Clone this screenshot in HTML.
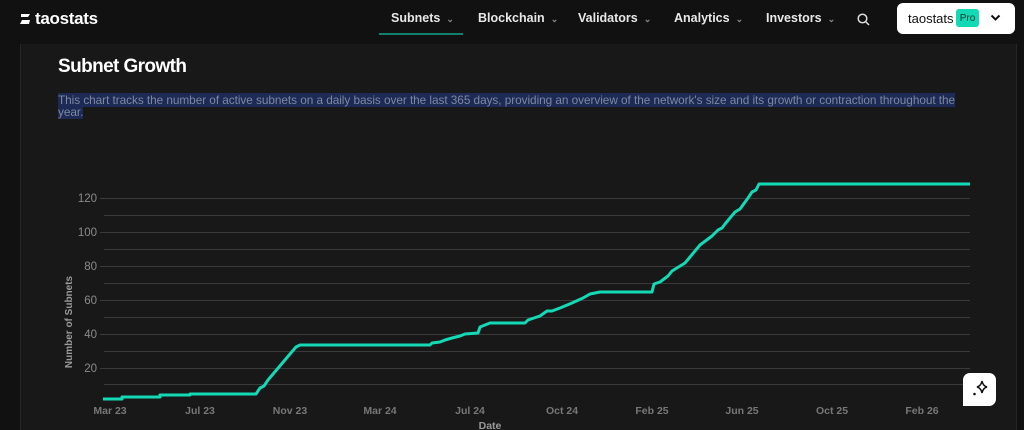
<!DOCTYPE html>
<html><head><meta charset="utf-8"><style>
body{margin:0;width:1024px;height:430px;overflow:hidden;background:#111;font-family:"Liberation Sans",sans-serif;position:relative}
.hdr{position:absolute;left:0;top:0;width:1024px;height:40px;background:#111}
.logo{position:absolute;left:20px;top:9px;color:#fff;font-size:17px;font-weight:bold;letter-spacing:-0.3px}
.nav{position:absolute;top:11px;color:#e8e8e8;font-size:12.5px;font-weight:bold}
.nav span{color:#888;font-size:9px;margin-left:6px}
.ul{position:absolute;left:379px;top:33px;width:84px;height:2px;background:#12806e}
.btn{position:absolute;left:897px;top:3px;width:118px;height:31px;background:#fff;border-radius:6px}
.panel{position:absolute;left:20px;top:44px;width:995px;height:386px;background:#181818;border-left:1px solid #262626;border-right:1px solid #262626}
h1{position:absolute;left:58px;top:56px;margin:0;color:#fff;font-size:19px;font-weight:bold;letter-spacing:-0.6px}
.desc{position:absolute;left:58px;top:94px;width:945px;color:#7e88a0;font-size:11.8px;line-height:12px;letter-spacing:-0.05px}
.desc span{background:#1c2a55}
.pro{position:absolute;left:59px;top:6px;width:23px;height:18px;background:#14d9b5;border-radius:3px;display:flex;align-items:center;justify-content:center;font-size:10px;color:#0a3a30}
</style></head><body>
<div class="hdr"></div>
<div class="logo"><svg width="11" height="12" viewBox="0 0 11 12" style="vertical-align:-1px;margin-right:4px"><path d="M1 1h9l-2 3H1z M2 7h8l-1 4H0z" fill="#fff"/></svg>taostats</div>
<div class="nav" style="left:391px">Subnets<span>⌄</span></div>
<div class="nav" style="left:478px">Blockchain<span>⌄</span></div>
<div class="nav" style="left:578px">Validators<span>⌄</span></div>
<div class="nav" style="left:674px">Analytics<span>⌄</span></div>
<div class="nav" style="left:766px">Investors<span>⌄</span></div>
<div class="ul"></div>
<svg style="position:absolute;left:857px;top:13px" width="13" height="13" viewBox="0 0 13 13"><circle cx="5.5" cy="5.5" r="4.3" fill="none" stroke="#ddd" stroke-width="1.5"/><path d="M9 9l3 3" stroke="#ddd" stroke-width="1.5"/></svg>
<div class="btn"><div style="position:absolute;left:11px;top:8px;font-size:13px;line-height:15px;color:#111">taostats</div><div class="pro">Pro</div><svg style="position:absolute;left:93px;top:11px" width="11" height="8" viewBox="0 0 11 8"><path d="M1.5 1.5l4 4 4-4" fill="none" stroke="#111" stroke-width="2"/></svg></div>
<div class="panel"></div>
<h1>Subnet Growth</h1>
<div class="desc"><span>This chart tracks the number of active subnets on a daily basis over the last 365 days, providing an overview of the network's size and its growth or contraction throughout the </span><br><span>year.</span></div>
<svg style="position:absolute;left:0;top:0" width="1024" height="430">
<g stroke="#3a3a3a" stroke-width="1">
<line x1="100" x2="970" y1="198.5" y2="198.5"/><line x1="104" x2="970" y1="215.5" y2="215.5"/>
<line x1="100" x2="970" y1="232.5" y2="232.5"/><line x1="104" x2="970" y1="249.5" y2="249.5"/>
<line x1="100" x2="970" y1="266.5" y2="266.5"/><line x1="104" x2="970" y1="283.5" y2="283.5"/>
<line x1="100" x2="970" y1="300.5" y2="300.5"/><line x1="104" x2="970" y1="317.5" y2="317.5"/>
<line x1="100" x2="970" y1="334.5" y2="334.5"/><line x1="104" x2="970" y1="351.5" y2="351.5"/>
<line x1="100" x2="970" y1="368.5" y2="368.5"/><line x1="104" x2="970" y1="384.5" y2="384.5"/>
</g>
<g fill="#8a8a8a" font-size="11.5" font-family="Liberation Sans" text-anchor="end">
<text x="97" y="202">120</text><text x="97" y="236">100</text><text x="97" y="270">80</text><text x="97" y="304">60</text><text x="97" y="338">40</text><text x="97" y="372">20</text>
</g>
<text transform="translate(72,322) rotate(-90)" fill="#9a9a9a" font-size="10" font-weight="bold" font-family="Liberation Sans" text-anchor="middle">Number of Subnets</text>
<g fill="#777" font-size="10.5" font-weight="bold" font-family="Liberation Sans" text-anchor="middle">
<text x="110" y="414">Mar 23</text><text x="200" y="414">Jul 23</text><text x="290" y="414">Nov 23</text><text x="380" y="414">Mar 24</text><text x="470" y="414">Jul 24</text><text x="562" y="414">Oct 24</text><text x="652" y="414">Feb 25</text><text x="742" y="414">Jun 25</text><text x="832" y="414">Oct 25</text><text x="922" y="414">Feb 26</text>
<text x="490" y="429" fill="#999">Date</text>
</g>
<path d="M103 399H122V397H160V395H190V394H256L260 388L264 386L268 380L290 354L296 347L300 345H430L432 343L440 342L445 340L452 338L460 336L465 334L478 333L480 327L490 323H525L528 320L540 316L547 311L552 311L560 308L572 303L583 298L590 294L600 292H652L654 284L660 282L668 276L672 271L685 263L700 245L712 236L718 230L722 228L725 224L735 212L740 209L748 198L752 192L756 190L759 184H970" fill="none" stroke="#14d9b5" stroke-width="3" stroke-linejoin="round"/>
</svg>
<div style="position:absolute;left:963px;top:373px;width:33px;height:33px;background:#fff;border-radius:7px 7px 7px 0"></div>
<svg style="position:absolute;left:963px;top:373px" width="33" height="33" viewBox="0 0 33 33"><path d="M19 8q1 5 5 6q-4 1-5 6q-1-5-5-6q4-1 5-6z" fill="none" stroke="#111" stroke-width="1.5"/><circle cx="11.5" cy="21" r="1.3" fill="#111"/></svg>
</body></html>
